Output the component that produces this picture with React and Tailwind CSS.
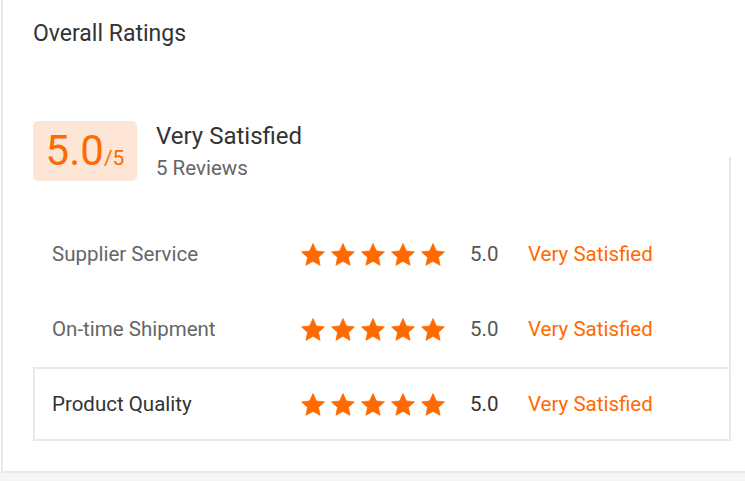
import React from "react";

const starPoints = (() => {
  const R = 12, r = 5.7, cx = 12, cy = 12.6;
  const pts = [];
  for (let i = 0; i < 10; i++) {
    const a = (-90 + i * 36) * Math.PI / 180;
    const rad = i % 2 === 0 ? R : r;
    pts.push(`${(cx + rad * Math.cos(a)).toFixed(2)},${(cy + rad * Math.sin(a)).toFixed(2)}`);
  }
  return pts.join(" ");
})();

function Star() {
  return (
    <svg width="24" height="23" viewBox="0 0 24 23" className="shrink-0">
      <polygon points={starPoints} fill="#ff6a00" strokeLinejoin="round" stroke="#ff6a00" strokeWidth="0.8" />
    </svg>
  );
}

function Stars() {
  return (
    <div className="flex w-[144px] items-center gap-[6px]">
      <Star />
      <Star />
      <Star />
      <Star />
      <Star />
    </div>
  );
}

function Row({ label, active }) {
  return (
    <div
      className={
        active
          ? "flex h-[74px] w-[698px] items-center border-2 border-[#e8e8e8] pl-[17px]"
          : "flex h-[75px] items-center border-2 border-transparent pl-[17px]"
      }
    >
      <span className={active ? "w-[249px] text-[20.5px] text-[#333]" : "w-[249px] text-[20.5px] text-[#666]"}>
        {label}
      </span>
      <Stars />
      <span className={active ? "ml-[25px] w-[58px] text-[20.5px] text-[#333]" : "ml-[25px] w-[58px] text-[20.5px] text-[#555]"}>
        5.0
      </span>
      <span className="text-[20.5px] text-[#ff6a00]">Very Satisfied</span>
    </div>
  );
}

export default function App() {
  return (
    <div
      className="flex h-[481px] w-[745px] flex-col overflow-hidden bg-white"
      style={{ fontFamily: "Roboto, 'Open Sans', sans-serif" }}
    >
      <div className="ml-px flex h-[473px] w-[760px] shrink-0 flex-col border-b-2 border-l-2 border-[#e8e8e8] bg-white pl-[30px]">
        <div className="pt-[20px] text-[23px] leading-[28px] text-[#333]">Overall Ratings</div>
        <div className="mt-[109px] w-[698px] border-r-2 border-[#e8e8e8]">
          <div className="-mt-[36px] flex h-[60px] items-start">
            <div className="flex h-[60px] w-[104px] items-center justify-center rounded-[5px] bg-[#fee6d7]">
              <div className="flex items-baseline text-[#ff6a00]">
                <span className="text-[42px] leading-none">5.0</span>
                <span className="text-[21px] leading-none">/5</span>
              </div>
            </div>
            <div className="ml-[19px] flex flex-col pt-px">
              <span className="text-[24px] leading-[28px] text-[#333]">Very Satisfied</span>
              <span className="mt-[6px] text-[20.5px] leading-[24px] text-[#666]">5 Reviews</span>
            </div>
          </div>
          <div className="mt-[36px] flex flex-col">
            <Row label="Supplier Service" />
            <Row label="On-time Shipment" />
          </div>
        </div>
        <Row label="Product Quality" active />
      </div>
      <div className="h-[8px] shrink-0 bg-[#f5f5f5]" />
    </div>
  );
}
